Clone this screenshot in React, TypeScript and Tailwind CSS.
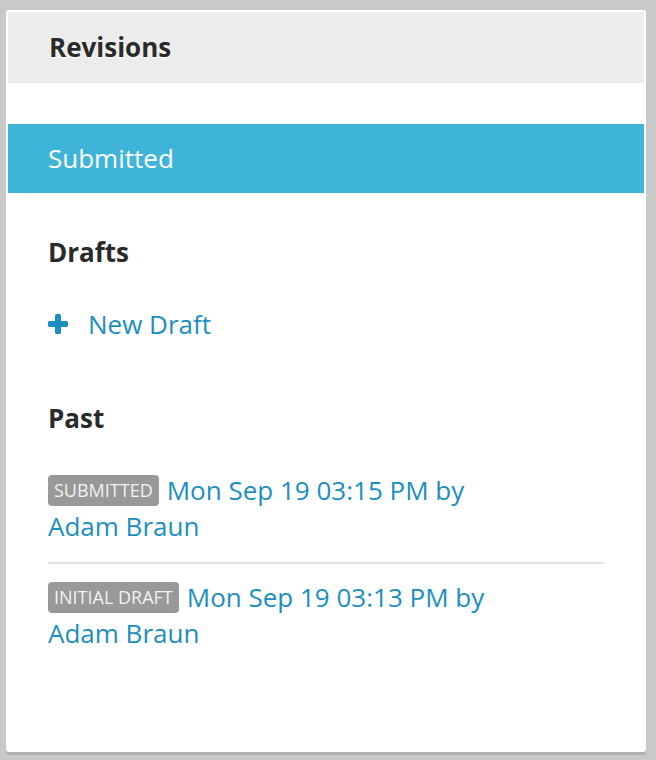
import React from "react";

type Revision = {
    status: string;
    date: string;
    author: string;
};

const pastRevisions: Revision[] = [
    { status: "Submitted", date: "Mon Sep 19 03:15 PM", author: "Adam Braun" },
    { status: "Initial Draft", date: "Mon Sep 19 03:13 PM", author: "Adam Braun" },
];

function PlusIcon() {
    return (
        <svg width="20" height="20" viewBox="0 0 20 20" className="shrink-0">
            <rect x="7" y="0" width="6" height="20" rx="1.5" fill="#1b8fc0" />
            <rect x="0" y="7" width="20" height="6" rx="1.5" fill="#1b8fc0" />
        </svg>
    );
}

function RevisionEntry({ revision }: { revision: Revision }) {
    return (
        <div className="text-[26px] leading-[36px] text-[#1b8fc0]">
            <span className="mr-[8px] inline-block rounded-[4px] bg-[#999999] px-[6px] align-[3px] text-[18px] leading-[31px] uppercase text-[#f2f2f2]">
                {revision.status}
            </span>
            <span>{revision.date} by </span>
            <span className="whitespace-nowrap">{revision.author}</span>
        </div>
    );
}

export default function App() {
    return (
        <div
            className="min-h-screen bg-[#c9c9c9] px-[6px] pt-[10px] pb-[8px]"
            style={{ fontFamily: '"Open Sans", "Noto Sans", sans-serif' }}
        >
            <div className="h-[742px] w-[640px] rounded-[3px] border-2 border-white bg-white shadow-[0_3px_0_#b1b1b1]">
                <div className="flex h-[71px] items-center bg-[#ececec] px-[41px]">
                    <h2 className="text-[26px] font-bold text-[#2a2a2a] [text-shadow:0_1px_2px_#ffffff]">Revisions</h2>
                </div>
                <div className="mt-[41px] flex h-[69px] items-center bg-[#3fb4d9] px-[40px]">
                    <span className="text-[26px] text-white">Submitted</span>
                </div>
                <div className="px-[40px]">
                    <h3 className="mt-[44px] text-[26px] leading-[30px] font-bold text-[#2a2a2a]">Drafts</h3>
                    <a href="#" className="mt-[39px] flex h-[36px] items-center gap-[20px] text-[26px] text-[#1b8fc0]">
                        <PlusIcon />
                        <span>New Draft</span>
                    </a>
                    <h3 className="mt-[61px] text-[26px] leading-[30px] font-bold text-[#2a2a2a]">Past</h3>
                    <div className="mt-[39px]">
                        {pastRevisions.map((revision, index) => (
                            <div key={index}>
                                {index > 0 && <div className="mt-[18px] mb-[15px] h-[2px] bg-[#e3e3e3]" />}
                                <RevisionEntry revision={revision} />
                            </div>
                        ))}
                    </div>
                </div>
            </div>
        </div>
    );
}
